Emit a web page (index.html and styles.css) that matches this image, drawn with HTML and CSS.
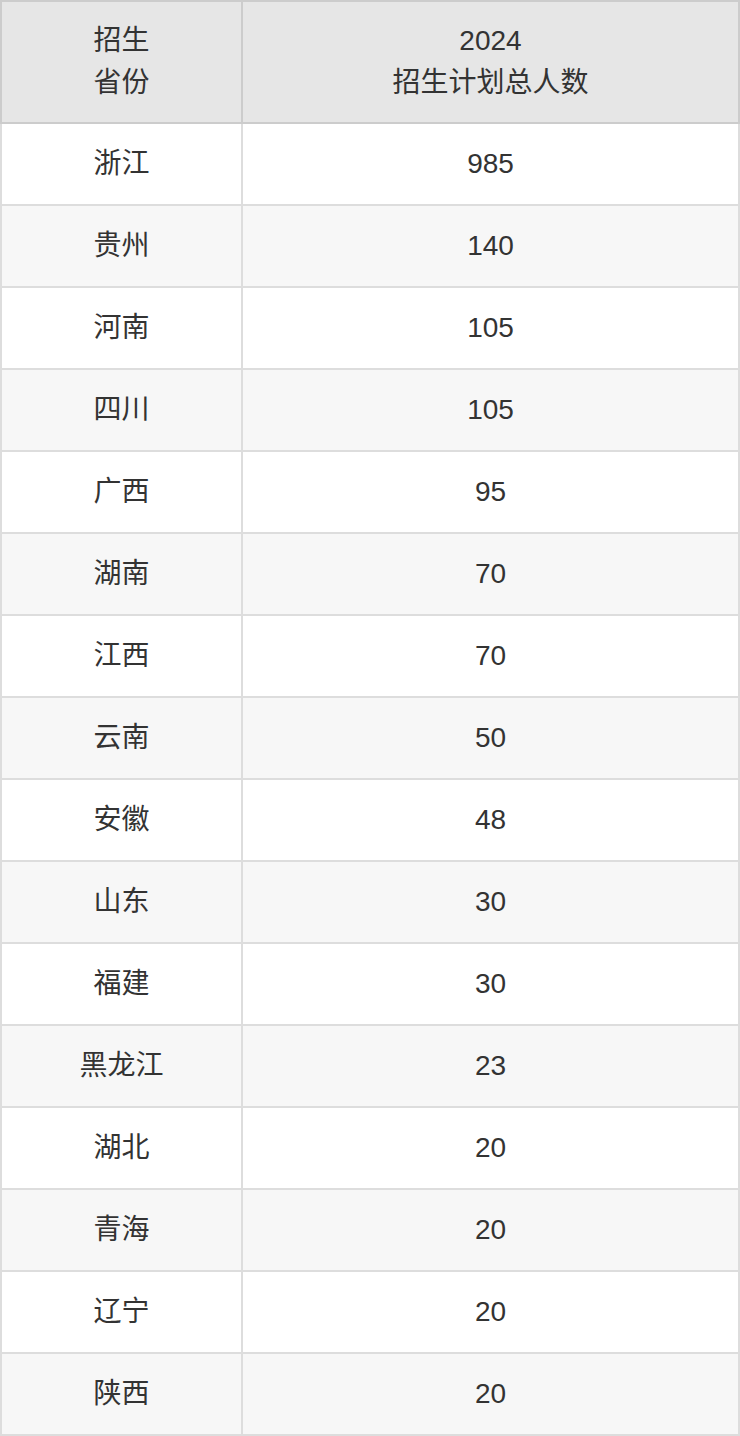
FILE: index.html
```html
<!DOCTYPE html>
<html lang="zh">
<head>
<meta charset="utf-8">
<link rel="stylesheet" href="styles.css">
</head>
<body>
<table class="plan">
  <thead>
    <tr><th class="c1">招生<br>省份</th><th class="c2">2024<br>招生计划总人数</th></tr>
  </thead>
  <tbody>
    <tr><td>浙江</td><td>985</td></tr>
    <tr><td>贵州</td><td>140</td></tr>
    <tr><td>河南</td><td>105</td></tr>
    <tr><td>四川</td><td>105</td></tr>
    <tr><td>广西</td><td>95</td></tr>
    <tr><td>湖南</td><td>70</td></tr>
    <tr><td>江西</td><td>70</td></tr>
    <tr><td>云南</td><td>50</td></tr>
    <tr><td>安徽</td><td>48</td></tr>
    <tr><td>山东</td><td>30</td></tr>
    <tr><td>福建</td><td>30</td></tr>
    <tr><td>黑龙江</td><td>23</td></tr>
    <tr><td>湖北</td><td>20</td></tr>
    <tr><td>青海</td><td>20</td></tr>
    <tr><td>辽宁</td><td>20</td></tr>
    <tr><td>陕西</td><td>20</td></tr>
  </tbody>
</table>
</body>
</html>
```
FILE: styles.css
```css
html, body {
  margin: 0;
  padding: 0;
  background: #ffffff;
}
.plan {
  width: 740px;
  border-collapse: collapse;
  table-layout: fixed;
  font-family: "Liberation Sans", "Noto Sans CJK SC", sans-serif;
  font-size: 28px;
  color: #333333;
}
.plan th, .plan td {
  padding: 0;
  text-align: center;
  vertical-align: middle;
  font-weight: normal;
  box-sizing: border-box;
}
.plan th {
  background: #e6e6e6;
  border: 2px solid #cccccc;
  height: 122px;
  line-height: 42px;
}
.plan th.c1 { width: 241px; }
.plan td {
  border: 2px solid #dddddd;
  height: 82px;
  line-height: 32px;
}
.plan tbody tr:nth-child(even) td {
  background: #f7f7f7;
}
```
